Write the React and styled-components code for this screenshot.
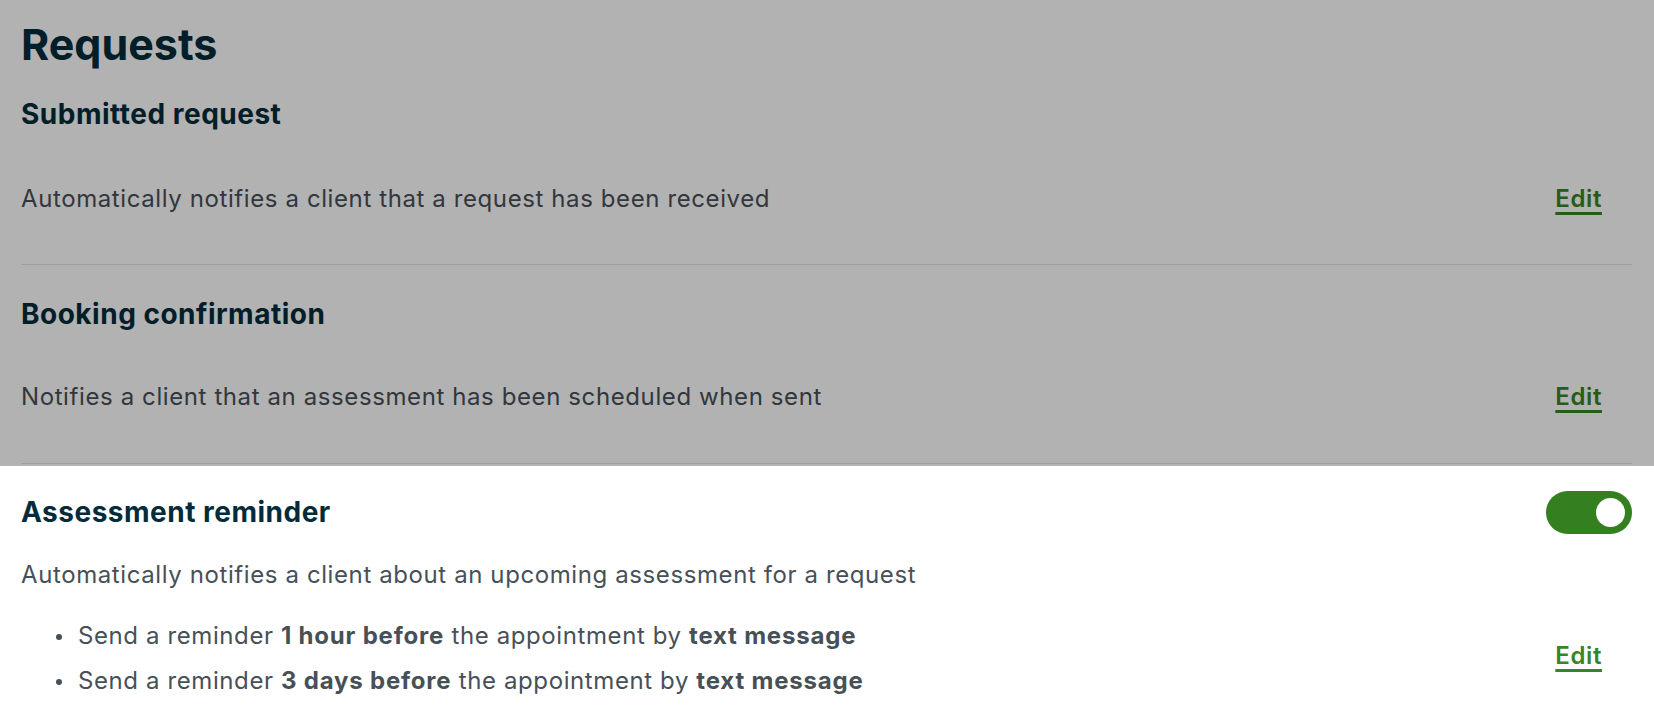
import React from "react";
import styled, { createGlobalStyle } from "styled-components";

const GlobalStyle = createGlobalStyle`
  html, body {
    margin: 0;
    padding: 0;
    background: #ffffff;
  }
  body {
    font-family: Inter, "Noto Sans", "Liberation Sans", sans-serif;
    -webkit-font-smoothing: antialiased;
  }
`;

const Page = styled.div`
  width: 1654px;
  height: 718px;
  overflow: hidden;
  background: #ffffff;
`;

// top part of the page sits under the dimmed backdrop
const Dimmed = styled.div`
  position: relative;
  padding: 19px 22px 2px 21px;

  &::after {
    content: "";
    position: absolute;
    inset: 0;
    background: rgba(0, 0, 0, 0.3);
    pointer-events: none;
  }
`;

const PageTitle = styled.h1`
  margin: 0;
  font-size: 43px;
  line-height: 50px;
  font-weight: 700;
  color: #032b3a;
`;

const Section = styled.section`
  border-bottom: ${(p) => (p.$divider ? "1px solid #e1e1e1" : "none")};
  padding-top: ${(p) => p.$top}px;
  padding-bottom: ${(p) => p.$bottom}px;
`;

const TitleRow = styled.div`
  display: flex;
  align-items: center;
  justify-content: space-between;
  height: 34px;
`;

const SectionTitle = styled.h2`
  margin: 0;
  font-size: 28px;
  line-height: 34px;
  font-weight: 700;
  letter-spacing: 0.5px;
  color: #032b3a;
`;

const Row = styled.div`
  display: flex;
  align-items: center;
  justify-content: space-between;
  margin-top: ${(p) => p.$gap}px;
`;

const Description = styled.p`
  margin: 0;
  font-size: 24px;
  line-height: 32px;
  letter-spacing: 0.6px;
  color: #475057;
`;

const EditLink = styled.a`
  margin-right: 30px;
  margin-bottom: ${(p) => p.$lift || 0}px;
  font-size: 24px;
  line-height: 32px;
  font-weight: 600;
  letter-spacing: 0.6px;
  color: #388523;
  text-decoration: underline;
  text-decoration-thickness: 3px;
  text-underline-offset: 5px;
  cursor: pointer;
`;

const Highlight = styled.div`
  padding: 0 22px 0 21px;
`;

const Toggle = styled.button`
  display: flex;
  align-items: center;
  justify-content: flex-end;
  width: 86px;
  height: 43px;
  padding: 0 7px;
  border: none;
  border-radius: 22px;
  background: #347f20;
  cursor: pointer;

  &::after {
    content: "";
    width: 29px;
    height: 29px;
    border-radius: 50%;
    background: #ffffff;
  }
`;

const ReminderList = styled.ul`
  margin: 0;
  padding: 0;
  list-style: none;
`;

const ReminderItem = styled.li`
  position: relative;
  font-size: 24px;
  line-height: 32px;
  letter-spacing: 0.6px;
  color: #475057;
  padding-left: 57px;

  & + & {
    margin-top: 13px;
  }

  &::before {
    content: "";
    position: absolute;
    left: 35px;
    top: 14px;
    width: 6px;
    height: 6px;
    border-radius: 50%;
    background: #475057;
  }

  strong {
    font-weight: 700;
    letter-spacing: 0.8px;
  }
`;

const reminders = [
  { when: "1 hour before", how: "text message" },
  { when: "3 days before", how: "text message" },
];

export default function App() {
  return (
    <Page>
      <GlobalStyle />
      <Dimmed>
        <PageTitle>Requests</PageTitle>
        <Section $top={28} $bottom={49} $divider>
          <SectionTitle>Submitted request</SectionTitle>
          <Row $gap={52}>
            <Description>
              Automatically notifies a client that a request has been received
            </Description>
            <EditLink>Edit</EditLink>
          </Row>
        </Section>
        <Section $top={32} $bottom={50} $divider>
          <SectionTitle>Booking confirmation</SectionTitle>
          <Row $gap={50}>
            <Description>
              Notifies a client that an assessment has been scheduled when sent
            </Description>
            <EditLink>Edit</EditLink>
          </Row>
        </Section>
      </Dimmed>
      <Highlight>
        <Section $top={29} $bottom={0}>
          <TitleRow>
            <SectionTitle>Assessment reminder</SectionTitle>
            <Toggle aria-label="Assessment reminder on" />
          </TitleRow>
          <Row $gap={30}>
            <Description>
              Automatically notifies a client about an upcoming assessment for a
              request
            </Description>
          </Row>
          <Row $gap={29}>
            <ReminderList>
              {reminders.map((r) => (
                <ReminderItem key={r.when}>
                  Send a reminder <strong>{r.when}</strong> the appointment by{" "}
                  <strong>{r.how}</strong>
                </ReminderItem>
              ))}
            </ReminderList>
            <EditLink $lift={6}>Edit</EditLink>
          </Row>
        </Section>
      </Highlight>
    </Page>
  );
}
